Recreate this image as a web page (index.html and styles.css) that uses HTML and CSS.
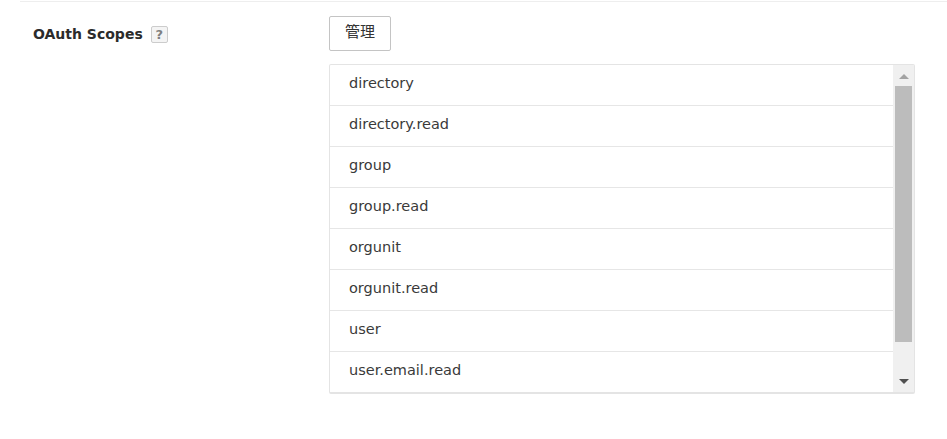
FILE: index.html
```html
<!DOCTYPE html>
<html lang="en">
<head>
    <meta charset="UTF-8">
    <meta name="viewport" content="width=device-width, initial-scale=1.0">
    <title>OAuth Scopes</title>
    <link rel="stylesheet" href="styles.css">
</head>
<body>
    <!-- OAuth scopes row -->
    <div class="section">
        <div class="label-col">
            <span class="label">OAuth Scopes</span>
            <span class="help">?</span>
        </div>
        <div class="value-col">
            <button class="manage-btn">管理</button>
            <div class="scope-box">
                <ul class="scope-list">
                    <li>directory</li>
                    <li>directory.read</li>
                    <li>group</li>
                    <li>group.read</li>
                    <li>orgunit</li>
                    <li>orgunit.read</li>
                    <li>user</li>
                    <li>user.email.read</li>
                </ul>
                <div class="scrollbar">
                    <div class="arrow arrow-up"></div>
                    <div class="thumb"></div>
                    <div class="arrow arrow-down"></div>
                </div>
            </div>
        </div>
    </div>
</body>
</html>
```

FILE: styles.css
```css
body {
    margin: 0;
    background: #fff;
    color: #333;
    font-family: "DejaVu Sans", "Noto Sans CJK JP", sans-serif;
    font-size: 14px;
}

/* Row with the divider on top */
.section {
    display: flex;
    margin: 1px 0 0 20px;
    padding-top: 14px;
    border-top: 1px solid #eee;
}

.label-col {
    display: flex;
    align-items: center;
    align-self: flex-start;
    gap: 8px;
    width: 309px;
    height: 36px;
    padding-left: 13px;
    box-sizing: border-box;
}

.label {
    font-weight: 700;
    color: #2b2b2b;
}

.help {
    display: flex;
    align-items: center;
    justify-content: center;
    width: 17px;
    height: 17px;
    box-sizing: border-box;
    border: 1px solid #ccc;
    border-radius: 2px;
    background: #f4f4f4;
    color: #808080;
    font-size: 13px;
    font-weight: 700;
}

.value-col {
    width: 586px;
}

.manage-btn {
    display: block;
    width: 62px;
    height: 35px;
    padding: 0 0 6px;
    border: 1px solid #c4c4c4;
    border-radius: 2px;
    background: #fff;
    color: #333;
    font-family: "Noto Sans CJK JP", sans-serif;
    font-size: 15px;
}

/* Scope list with its scrollbar */
.scope-box {
    display: flex;
    height: 330px;
    margin-top: 13px;
    box-sizing: border-box;
    border: 1px solid #e4e4e4;
    border-bottom-width: 2px;
    border-radius: 2px;
}

.scope-list {
    flex: 1;
    margin: 0;
    padding: 0;
    list-style: none;
    color: #3a3a3a;
    font-size: 14.5px;
}

.scope-list li {
    height: 41px;
    padding: 8px 0 0 19px;
    box-sizing: border-box;
    border-bottom: 1px solid #e6e6e6;
    line-height: 21px;
}

.scope-list li:last-child {
    border-bottom: 0;
}

.scrollbar {
    display: flex;
    flex-direction: column;
    align-items: center;
    width: 21px;
    background: #f0f0f0;
}

.thumb {
    width: 17px;
    height: 256px;
    margin-top: 7px;
    background: #bcbcbc;
}

.arrow {
    width: 0;
    height: 0;
    border-left: 5px solid transparent;
    border-right: 5px solid transparent;
}

.arrow-up {
    margin-top: 9px;
    border-bottom: 5px solid #a3a3a3;
}

.arrow-down {
    margin-top: 37px;
    border-top: 5px solid #505050;
}
```
